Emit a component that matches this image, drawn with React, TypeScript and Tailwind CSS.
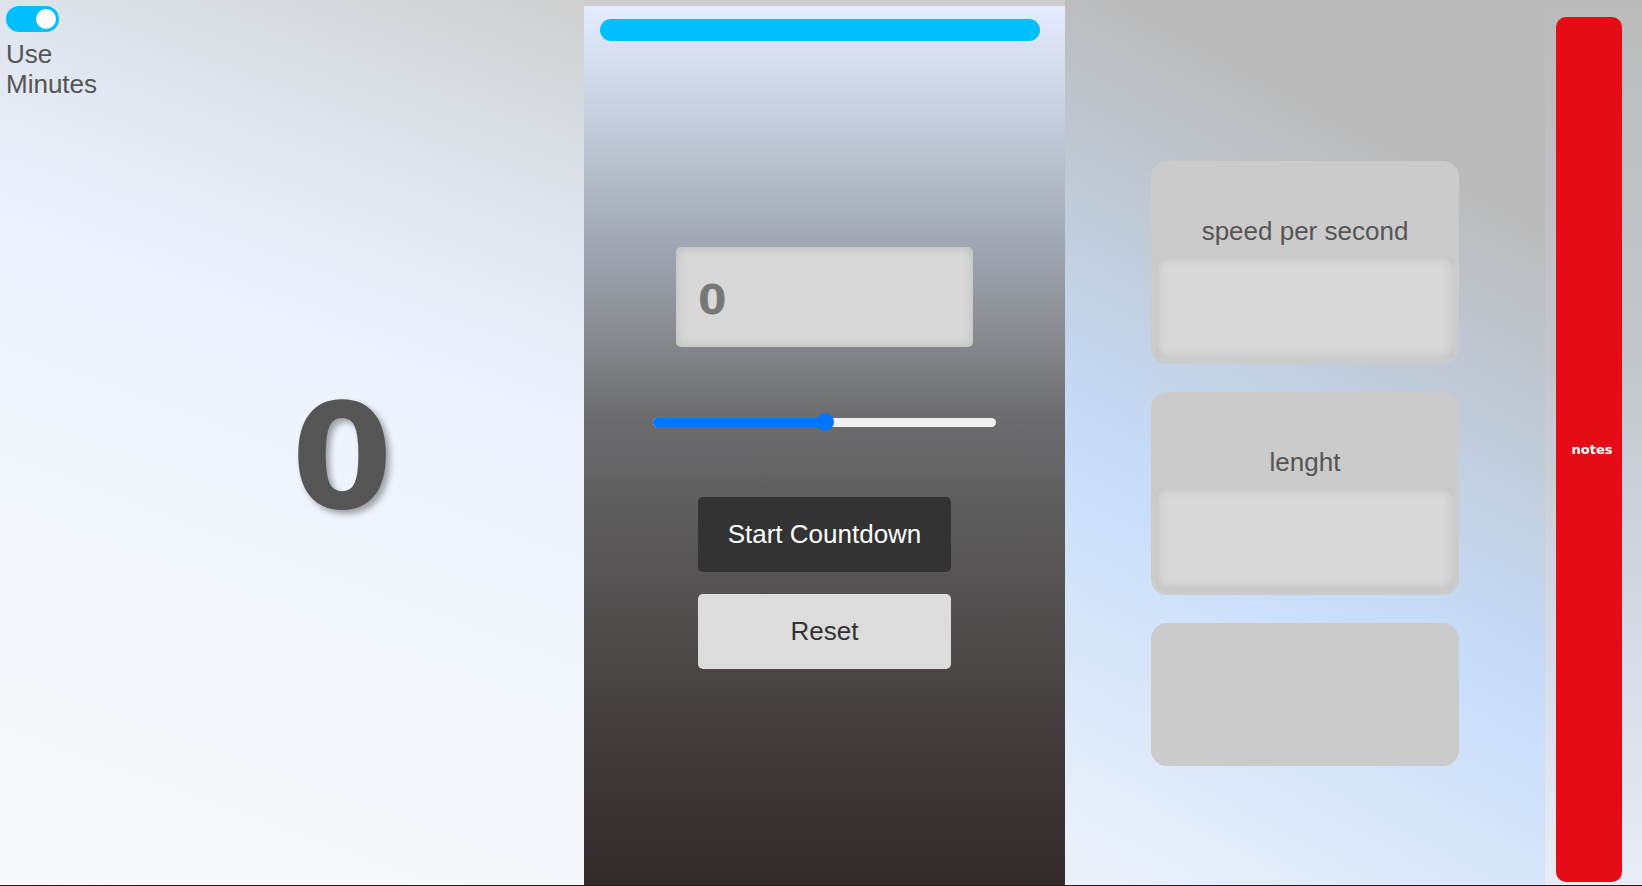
import React, { useState } from 'react';

const sans = "font-['Liberation_Sans',Arial,sans-serif]";
const verdana = "font-['DejaVu_Sans',Verdana,sans-serif]";

const Toggle: React.FC<{ on: boolean; onChange: () => void }> = ({ on, onChange }) => (
  <button
    onClick={onChange}
    className={`relative w-[53px] h-[26px] rounded-full ${on ? 'bg-[#00bfff]' : 'bg-[#cccccc]'}`}
  >
    <span
      className={`absolute top-[3px] w-[20px] h-[20px] rounded-full bg-white ${on ? 'left-[30px]' : 'left-[3px]'}`}
    />
  </button>
);

const InputBox: React.FC<{ value?: string }> = ({ value }) => (
  <div className="w-[297px] h-[100px] rounded-[5px] bg-[#d8d8d8] shadow-[inset_0_0_12px_rgba(0,0,0,0.14)] flex items-center px-[22px] pt-[8px]">
    {value && <span className={`${verdana} font-bold text-[41px] text-[#787878]`}>{value}</span>}
  </div>
);

const Card: React.FC<{ label: string }> = ({ label }) => (
  <div className="w-[308px] h-[203px] rounded-[16px] bg-[#cbcbcb] flex flex-col justify-end items-center px-[5px] pb-[6px]">
    <span className={`${sans} text-[26px] leading-[30px] text-[#555555] mb-[11px]`}>{label}</span>
    <div className="w-full h-[101px] rounded-[6px] bg-[#d8d8d8] shadow-[inset_0_0_12px_rgba(0,0,0,0.14)]" />
  </div>
);

export default function App() {
  const [useMinutes, setUseMinutes] = useState(true);
  const slider = 50;

  return (
    <div className="w-[1642px] h-[886px] flex flex-col overflow-hidden bg-[linear-gradient(to_bottom_left,#bbbbbb_16%,#c6dcf9_42%,#e9f0fa_65%,#f8f9fb_100%)]">
      <div className="h-[885px] flex">
        {/* Left: display */}
        <div className="w-[584px] h-full flex bg-[linear-gradient(200deg,#cfcfcf_0%,#dfe6ef_22%,#ecf3fe_40%,#f4f7fb_75%,#f7f8fa_100%)]">
          <div className="w-[100px] pl-[6px] pt-[6px] flex flex-col items-start">
            <Toggle on={useMinutes} onChange={() => setUseMinutes(!useMinutes)} />
            <span className={`${sans} text-[26px] leading-[30px] text-[#555555] mt-[7px]`}>Use Minutes</span>
          </div>
          <div className="flex-1 flex items-center justify-center pt-[28px]">
            <span className={`${verdana} font-bold text-[146px] leading-none text-[#555555] [text-shadow:4px_4px_6px_rgba(0,0,0,0.35)]`}>
              0
            </span>
          </div>
        </div>

        {/* Center: controls */}
        <div className="w-[481px] h-full bg-[#cdcdcd] flex flex-col">
          <div className="mt-[6px] flex-1 flex flex-col items-center bg-[linear-gradient(to_bottom,#e3edff_0%,#c4cddc_13%,#a0a7b3_27%,#8a8c91_37%,#6c6c6e_47%,#5e5d5e_57%,#4b4747_75%,#3d3636_88%,#342a2b_100%)]">
            <div className="self-start ml-[16px] mt-[13px] w-[440px] h-[22px] rounded-full bg-[#00bfff]" />
            <div className="mt-[206px]">
              <InputBox value="0" />
            </div>
            <div className="mt-[65px] relative w-[343px] h-[20px] flex items-center">
              <div className="w-full h-[9px] rounded-full bg-[#efefef] overflow-hidden">
                <div className="h-full bg-[#0075ff]" style={{ width: `${slider}%` }} />
              </div>
              <div
                className="absolute top-[1px] w-[18px] h-[18px] rounded-full bg-[#0075ff]"
                style={{ left: `calc(${slider}% - 9px)` }}
              />
            </div>
            <button className={`${sans} mt-[65px] w-[253px] h-[75px] rounded-[5px] bg-[#333333] text-white text-[26px]`}>
              Start Countdown
            </button>
            <button className={`${sans} mt-[22px] w-[253px] h-[75px] rounded-[5px] bg-[#dcdcdc] text-[#333333] text-[26px]`}>
              Reset
            </button>
          </div>
        </div>

        {/* Right: settings */}
        <div className="w-[480px] h-full flex flex-col items-center gap-[28px] pt-[161px]">
          <Card label="speed per second" />
          <Card label="lenght" />
          <div className="w-[308px] h-[143px] rounded-[16px] bg-[#cbcbcb]" />
        </div>

        {/* Notes */}
        <div className="w-[97px] h-full pt-[17px] pl-[11px] bg-[linear-gradient(to_bottom,#bbbbbb_0%,#c2c6cc_40%,#d6dde8_75%,#e8edf5_100%)]">
          <div className="w-[66px] h-[865px] rounded-[10px] bg-[#e50b17] flex items-center justify-center pl-[6px]">
            <span className={`${verdana} font-bold text-[13px] text-white`}>notes</span>
          </div>
        </div>
      </div>
      <div className="h-px bg-[#1f1f23]" />
    </div>
  );
}
